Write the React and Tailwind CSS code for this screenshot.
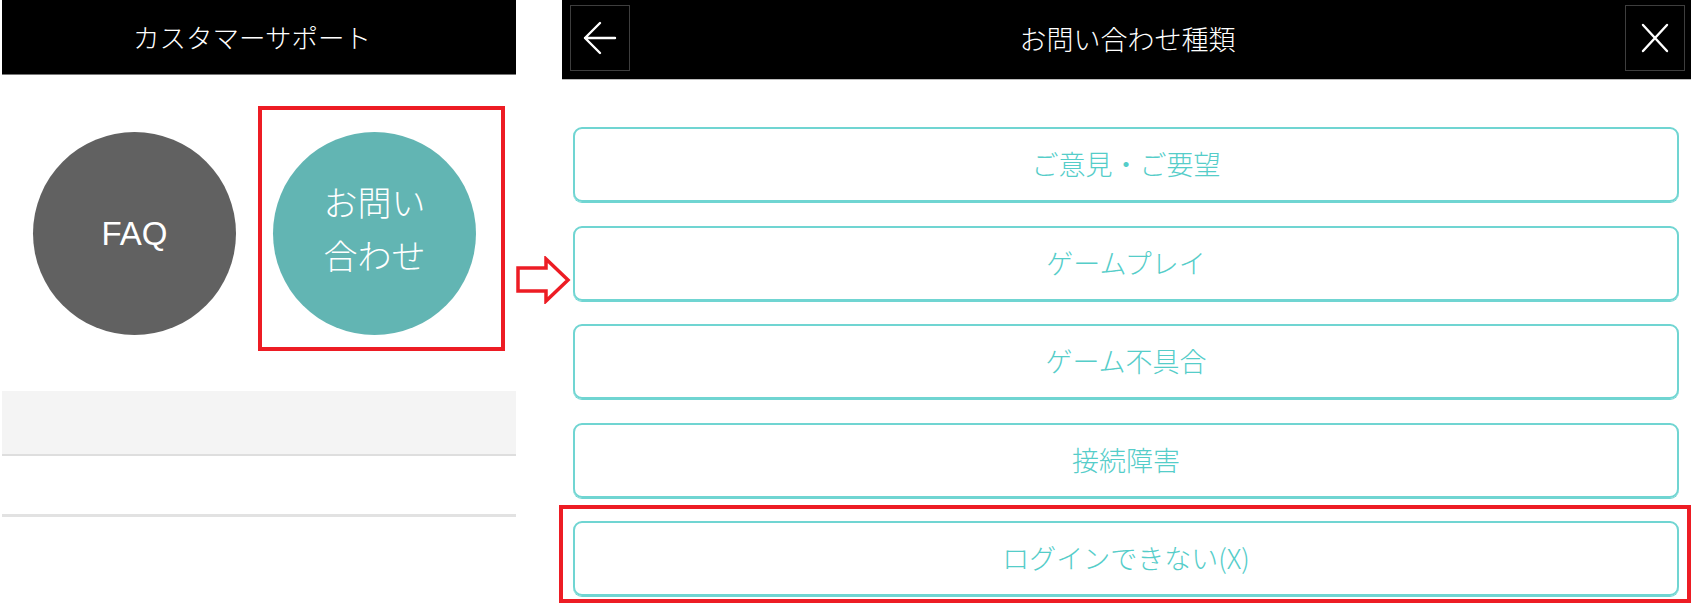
const jp = { fontFamily: '"Noto Sans CJK JP", "Noto Sans", sans-serif' }

const OPTIONS = ['ご意見・ご要望', 'ゲームプレイ', 'ゲーム不具合', '接続障害', 'ログインできない(X)']

function SupportPanel() {
  return (
    <div className="ml-[2px] w-[514px] shrink-0">
      {/* header */}
      <div className="flex h-[75px] items-center justify-center border-b border-[#777] bg-black pr-[14px] text-[26.5px] font-light text-white">
        カスタマーサポート
      </div>

      {/* FAQ / contact circles */}
      <div className="flex gap-[37px] pl-[31px] pt-[57px]">
        <div className="grid h-[203px] w-[203px] place-items-center rounded-full bg-[#616161] font-['Liberation_Sans',Arial,sans-serif] text-[33px] text-white">
          FAQ
        </div>
        <div className="relative">
          <div className="grid h-[203px] w-[203px] place-items-center rounded-full bg-[#62b5b3] pb-[12px] text-center text-[34px] leading-[53px] font-light text-white">
            <span>
              お問い
              <br />
              合わせ
            </span>
          </div>
          <div className="absolute left-[-15px] top-[-26px] h-[245px] w-[247px] border-4 border-[#ed1c24]" />
        </div>
      </div>

      {/* list rows */}
      <div className="mt-[56px] h-[65px] border-b-2 border-[#dedede] bg-[#f4f4f4]" />
      <div className="h-[61px] border-b-[3px] border-[#e2e2e2]" />
    </div>
  )
}

function ContactTypePanel() {
  return (
    <div className="ml-[46px] w-[1129px] shrink-0">
      {/* header */}
      <div className="flex h-[80px] items-center justify-between border-b border-[#bbb] bg-black pl-[8px] pr-[6px]">
        <button className="mb-[3px] grid h-[66px] w-[60px] place-items-center border border-[#3e3e3e]">
          <svg width="34" height="34" viewBox="0 0 34 34" fill="none" stroke="white" strokeWidth="2.4" strokeLinecap="round" strokeLinejoin="round">
            <path d="M32 17H2M17 2L2 17l15 15" />
          </svg>
        </button>
        <span className="text-[27px] font-light text-white">お問い合わせ種類</span>
        <button className="mb-[3px] grid h-[66px] w-[60px] place-items-center border border-[#3e3e3e]">
          <svg width="28" height="30" viewBox="0 0 28 30" fill="none" stroke="white" strokeWidth="2.4" strokeLinecap="round">
            <path d="M2 2l24 26M26 2L2 28" />
          </svg>
        </button>
      </div>

      {/* options */}
      <div className="flex flex-col gap-[23.5px] pl-[11px] pr-[12px] pt-[47px]">
        {OPTIONS.map((label, i) => (
          <div key={label} className="relative">
            <button className="flex h-[75px] w-full items-center justify-center rounded-[9px] border-2 border-[#70d5d2] text-[27px] font-light text-[#55cdc9] shadow-[0_1px_0_#70d5d2]">
              {label}
            </button>
            {i === OPTIONS.length - 1 && (
              <div className="absolute left-[-14px] top-[-16px] h-[98px] w-[1132px] border-4 border-[#ed1c24]" />
            )}
          </div>
        ))}
      </div>
    </div>
  )
}

export default function App() {
  return (
    <div className="relative flex h-[614px] w-[1700px] overflow-hidden bg-white" style={jp}>
      <SupportPanel />
      <ContactTypePanel />

      {/* hint arrow between the two screens */}
      <svg className="absolute left-[515px] top-[256px]" width="56" height="48" viewBox="0 0 56 48" fill="white" stroke="#ed1c24" strokeWidth="3.5" strokeLinejoin="miter">
        <path d="M3 12h28V3l22 21-22 21V35H3z" />
      </svg>
    </div>
  )
}
